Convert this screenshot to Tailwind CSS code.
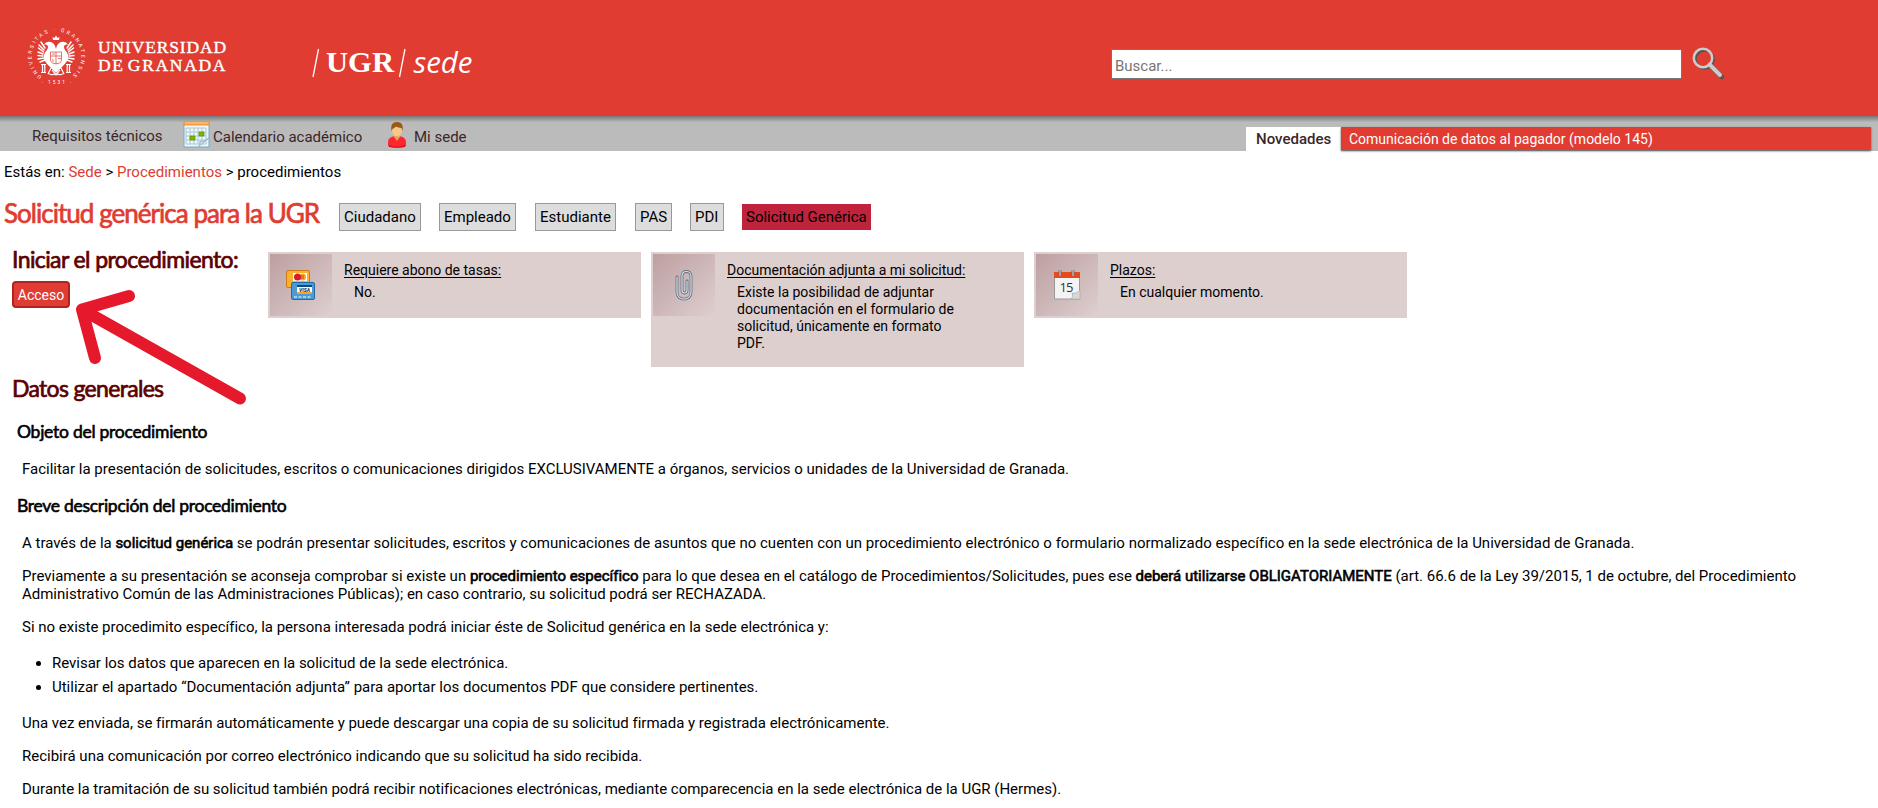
<!DOCTYPE html>
<html lang="es">
<head>
<meta charset="utf-8">
<title>Solicitud genérica para la UGR</title>
<script src="https://cdn.jsdelivr.net/npm/@tailwindcss/browser@4"></script>
</head>
<body class="relative h-[808px] overflow-hidden bg-white font-['Roboto',sans-serif] text-[15px] leading-[18px] text-black">
<header class="flex h-[116px] bg-[#e03c31]">
  <svg class="mt-[26px] ml-[26px] h-[60px] w-[60px] shrink-0 overflow-visible" viewBox="0 0 60 60" fill="#fff">
    <defs><path id="ring" d="M17.500 51.500A24.800 24.800 0 1 1 43.500 51.500"/></defs>
    <text font-family="Roboto" font-size="5.200"><textPath href="#ring" startOffset="2" textLength="122">UNIVERSITAS · GRANATENSIS</textPath></text>
    <text x="31.500" y="57.500" font-family="Roboto" font-size="4.800" text-anchor="middle" letter-spacing="2">· 1531 ·</text>
    <path d="M27 14l-.5-3 2 1 1.500-2.500 1.500 2.500 2-1-.5 3z"/>
    <path d="M30 23c-1-5-4-8-8-7-2 0-3 1-4 3 2-1 4 0 4 2 0 3-3 4-4 8-1 5 3 9 6 12l6 6 6-6c3-3 7-7 6-12-1-4-4-5-4-8 0-2 2-3 4-2-1-2-2-3-4-3-4-1-7 2-8 7z"/>
    <g stroke="#fff" stroke-width="1.500" stroke-linecap="round" fill="none"><path d="M19 22l-4-6M18 24l-5-5M17.500 26l-5-4M17 28l-5-2M17 30l-5-.5M18 32l-6 1M19 34l-5 2M41 22l4-6M42 24l5-5M42.500 26l5-4M43 28l5-2M43 30l5-.5M42 32l6 1M41 34l5 2"/></g>
    <g stroke="#fff" stroke-width="1.200" fill="none"><path d="M15 38.500h5M15 46.500h5M16.500 39v7M18.800 39v7M40 38.500h5M40 46.500h5M41.200 39v7M43.500 39v7M22 48l3-6M38 48l-3-6M22 47c2 3 5 1 8 1s6 2 8-1M26 44l4 5 4-5"/></g>
    <g stroke="#e03c31" stroke-width=".7" fill="none"><path d="M24.500 26h11v8c0 5-11 5-11 0zM24.500 30h11M30 26v12M26 28h3M32 32.500h3M27 33v3"/></g>
  </svg>
  <div class="mt-[38px] ml-[12px] w-[214px] font-['Liberation_Serif',serif] text-[17.500px] leading-[18px] text-white [-webkit-text-stroke:0.400px_white]">
    <p class="whitespace-nowrap tracking-[0.860px]">UNIVERSIDAD</p><p class="whitespace-nowrap tracking-[1.700px] [word-spacing:-3px]">DE GRANADA</p>
  </div>
  <svg class="mt-[44px] h-[40px] w-[170px] overflow-visible" viewBox="0 0 170 40" fill="#fff"><path d="M1 33L6.500 5M87.500 33L93 5" stroke="#fff" stroke-width="1.300"/>
    <text x="14" y="28" font-family="Liberation Serif" font-weight="bold" font-size="29" textLength="68" lengthAdjust="spacingAndGlyphs">UGR</text>
    <text x="101.500" y="28.500" font-family="Open Sans" font-style="italic" font-size="29" textLength="59" lengthAdjust="spacingAndGlyphs">sede</text></svg>
  <div class="mt-[49px] ml-[629px] flex h-[30px] w-[571px] items-center border border-[#767676] bg-white pt-[4px] pl-[3px] text-[15px] text-[#757575]">Buscar...</div>
  <svg class="mt-[46px] ml-[9px] h-[36px] w-[36px]" viewBox="0 0 36 36" fill="none"><g stroke="#555" transform="translate(1 1)"><circle cx="12.500" cy="12.500" r="9" stroke-width="2.500"/><path d="M19 19L30 30" stroke-width="4.500" stroke-linecap="round"/></g><g stroke="#ccc"><circle cx="12" cy="12" r="9.200" stroke-width="2.500"/><path d="M18.500 18.500L29 29" stroke-width="4" stroke-linecap="round"/></g></svg>
</header>
<nav class="flex h-[35px] bg-[#bbb] bg-linear-to-b from-[#777] via-[#bbb] via-[18%] to-[#bbb] text-[#3b2626]">
  <a class="mt-[11px] ml-[32px] w-[151px]">Requisitos técnicos</a>
  <svg class="mt-[5px] h-[28px] w-[28px]" viewBox="0 0 28 28"><path d="M1 1h25v25h-25z" fill="#eef6fb" stroke="#79a9c8"/><path d="M.5.500h26v4h-26z" fill="#f49a3b"/><path d="M2 2h23" stroke="#ffd19b"/><path d="M3 7h20v16h-20zM3 11h20M3 15h20M3 19h20M7 7v16M11 7v16M15 7v16M19 7v16" stroke="#b0c4cf" fill="none"/><path d="M7 15h5v4h-5zM16 11h5v4h-5z" fill="#79b800" stroke="#549000" stroke-width=".7"/><path d="M15 26c2-2 2-3 2-6 4 1 6-1 9-3z" fill="#cee4f3" stroke="#8cb6d4"/></svg>
  <a class="mt-[12px] ml-[2px] w-[174px]">Calendario académico</a>
  <svg class="mt-[5px] h-[28px] w-[20px]" viewBox="0 0 20 28"><path d="M1 22c0-5 3-7 9-7s9 2 9 7v3c-5 2-13 2-18 0z" fill="#ff2630"/><path d="M2 24c5 2 11 2 16 0v2c-5 1-11 1-16 0z" fill="#d5101d"/><path d="M7 12h6v4l-3 4-3-4z" fill="#e6a254"/><ellipse cx="10" cy="9.500" rx="4.800" ry="6" fill="#f6c98a"/><path d="M4.500 10c-1-6 1-9 5.500-9s6.500 3 5.500 9l-1-3c-3 0-5-2-6-1l-3 2z" fill="#9a5a12"/></svg>
  <a class="mt-[12px] ml-[7px] w-[832px]">Mi sede</a>
  <b class="mt-[11px] h-[24px] w-[95px] bg-white pt-[3px] pl-[10px] font-medium">Novedades</b>
  <span class="mt-[11px] h-[23px] w-[530px] bg-[#e03c31] pt-[3px] pl-[8px] text-[14px] text-white shadow-[0_1px_2px_#555]">Comunicación de datos al pagador (modelo 145)</span>
</nav>
<p class="mt-[12px] pl-[4px]">Estás en: <a class="text-[#e03c31]">Sede</a> &gt; <a class="text-[#e03c31]">Procedimientos</a> &gt; procedimientos</p>
<div class="mt-[17px] flex h-[34px] pl-[4px]">
  <h1 class="-mt-px w-[335px] font-['Lato',sans-serif] text-[26px] leading-[32px] font-normal tracking-[-0.970px] whitespace-nowrap text-[#e03c31] [-webkit-text-stroke:0.700px]">Solicitud genérica para la UGR</h1>
  <div class="mt-[5px] flex h-[28px] gap-[18px] leading-[26px] whitespace-nowrap">
    <a class="w-[82px] border border-[#999] bg-[#ddd] pl-[4px]">Ciudadano</a>
    <a class="w-[77px] border border-[#999] bg-[#ddd] pl-[4px]">Empleado</a>
    <a class="ml-px w-[81px] border border-[#999] bg-[#ddd] pl-[4px]">Estudiante</a>
    <a class="ml-px w-[37px] border border-[#999] bg-[#ddd] pl-[4px]">PAS</a>
    <a class="w-[34px] border border-[#999] bg-[#ddd] pl-[4px]">PDI</a>
    <a class="my-px w-[129px] bg-[#c0233c] pl-[4px] leading-[26px]">Solicitud Genérica</a>
  </div>
</div>
<main>
  <div class="mt-[20px] flex h-[128px] items-start">
    <div class="ml-[12px] w-[256px]">
      <h2 class="-mt-[9px] font-['Lato',sans-serif] text-[23px] leading-[32px] font-normal tracking-[-0.600px] whitespace-nowrap text-[#5c0000] [-webkit-text-stroke:0.700px]">Iniciar el procedimiento:</h2>
      <button class="mt-[6px] h-[27px] w-[58px] rounded-[4px] border-2 border-[#b22222] bg-[#e03c31] text-[14px] text-white">Acceso</button>
    </div>
    <section class="flex h-[66px] w-[373px] bg-[#decfcf] p-[2px] text-[14px] leading-[17px]">
      <div class="flex h-[62px] w-[62px] items-center justify-center bg-linear-135 from-[#bd9fa1] to-[#decfcf]"><svg class="h-[32px] w-[32px]" viewBox="0 0 32 32"><rect x="1.500" y="1.500" width="23" height="17" rx="1.500" fill="#fdb02c" stroke="#ca7b15"/><path d="M8 4h14v8h-14z" fill="#fff"/><circle cx="17.500" cy="8" r="3.500" fill="#f7a329"/><circle cx="12.500" cy="8" r="3.500" fill="#d51c2d"/><path d="M13 7h6M13 9h6" stroke="#d51c2d" stroke-width=".8"/><rect x="6.500" y="13.500" width="23" height="17" rx="1.500" fill="#4b9bd5" stroke="#226ba6"/><path d="M12 16h15v9h-15z" fill="#fff"/><path d="M12 16h15v2h-15z" fill="#10457f"/><path d="M12 23h15v2h-15z" fill="#f8a51c"/><text x="14" y="22.500" font-family="Roboto" font-size="5" font-weight="900" font-style="italic" fill="#123b78" textLength="11">VISA</text><path d="M9 28h18" stroke="#fff" stroke-dasharray="3 1.500"/></svg></div>
      <div class="mt-[8px] ml-[12px]"><h3 class="underline underline-offset-[2px]">Requiere abono de tasas:</h3><p class="mt-[5px] ml-[10px] w-[230px]">No.</p></div>
    </section>
    <section class="ml-[10px] flex h-[115px] w-[373px] bg-[#decfcf] p-[2px] text-[14px] leading-[17px]">
      <div class="flex h-[62px] w-[62px] items-center justify-center bg-linear-135 from-[#bd9fa1] to-[#decfcf]"><svg class="h-[32px] w-[32px]" viewBox="0 0 32 32" fill="none" stroke-linecap="round"><path d="M9 8v15c0 9.500 14 9.500 14 0V7c0-6-9-6-9 0v14c0 4 5 4 5 0V12" stroke="#5f7080" stroke-width="2.800"/><path d="M9 8v15c0 9.500 14 9.500 14 0V7c0-6-9-6-9 0v14c0 4 5 4 5 0V12" stroke="#d5dfe8" stroke-width="1.200"/></svg></div>
      <div class="mt-[8px] ml-[12px]"><h3 class="underline underline-offset-[2px]">Documentación adjunta a mi solicitud:</h3><p class="mt-[5px] ml-[10px] w-[230px]">Existe la posibilidad de adjuntar<br>documentación en el formulario de<br>solicitud, únicamente en formato<br>PDF.</p></div>
    </section>
    <section class="ml-[10px] flex h-[66px] w-[373px] bg-[#decfcf] p-[2px] text-[14px] leading-[17px]">
      <div class="flex h-[62px] w-[62px] items-center justify-center bg-linear-135 from-[#bd9fa1] to-[#decfcf]"><svg class="h-[32px] w-[32px]" viewBox="0 0 32 32"><path d="M3.500 4h25v26h-25z" fill="#f3f3f3" stroke="#999"/><path d="M3 3h26v6h-26z" fill="#e84a1f"/><path d="M9 1v6M22 1v6" stroke="#666" stroke-width="2.800"/><path d="M9 1v6M22 1v6" stroke="#ddd" stroke-width="1"/><text x="8.500" y="23" font-family="Open Sans" font-size="13" fill="#333" textLength="14">15</text><path d="M20 30c2-2 2-3 1-6 3 1 5 0 8-3v9z" fill="#d8d8d8" stroke="#aaa" stroke-width=".7"/></svg></div>
      <div class="mt-[8px] ml-[12px]"><h3 class="underline underline-offset-[2px]">Plazos:</h3><p class="mt-[5px] ml-[10px] w-[230px]">En cualquier momento.</p></div>
    </section>
  </div>
  <h2 class="-mt-[8px] ml-[12px] font-['Lato',sans-serif] text-[23px] leading-[32px] font-normal tracking-[-0.680px] text-[#5c0000] [-webkit-text-stroke:0.700px]">Datos generales</h2>
  <h3 class="mt-[17px] ml-[17px] font-['Lato',sans-serif] text-[17.500px] leading-[22px] font-normal tracking-[-0.250px] [-webkit-text-stroke:0.600px]">Objeto del procedimiento</h3>
  <p class="mt-[17px] ml-[22px] tracking-[-0.005px]">Facilitar la presentación de solicitudes, escritos o comunicaciones dirigidos EXCLUSIVAMENTE a órganos, servicios o unidades de la Universidad de Granada.</p>
  <h3 class="mt-[17px] ml-[17px] font-['Lato',sans-serif] text-[17.500px] leading-[22px] font-normal tracking-[-0.280px] [-webkit-text-stroke:0.600px]">Breve descripción del procedimiento</h3>
  <div class="mt-[17px] ml-[22px] flex w-[1800px] flex-col gap-[15px] tracking-[-0.008px]">
    <p>A través de la <b class="font-normal [-webkit-text-stroke:0.600px]">solicitud genérica</b> se podrán presentar solicitudes, escritos y comunicaciones de asuntos que no cuenten con un procedimiento electrónico o formulario normalizado específico en la sede electrónica de la Universidad de Granada.</p>
    <p class="whitespace-nowrap">Previamente a su presentación se aconseja comprobar si existe un <b class="font-normal [-webkit-text-stroke:0.600px]">procedimiento específico</b> para lo que desea en el catálogo de Procedimientos/Solicitudes, pues ese <b class="font-normal [-webkit-text-stroke:0.600px]">deberá utilizarse OBLIGATORIAMENTE</b> (art. 66.6 de la Ley 39/2015, 1 de octubre, del Procedimiento<br>Administrativo Común de las Administraciones Públicas); en caso contrario, su solicitud podrá ser RECHAZADA.</p>
    <p>Si no existe procedimito específico, la persona interesada podrá iniciar éste de Solicitud genérica en la sede electrónica y:</p>
    <ul class="my-[3px] flex list-disc flex-col gap-[6px] pl-[30px]"><li>Revisar los datos que aparecen en la solicitud de la sede electrónica.</li><li>Utilizar el apartado “Documentación adjunta” para aportar los documentos PDF que considere pertinentes.</li></ul>
    <p>Una vez enviada, se firmarán automáticamente y puede descargar una copia de su solicitud firmada y registrada electrónicamente.</p>
    <p>Recibirá una comunicación por correo electrónico indicando que su solicitud ha sido recibida.</p>
    <p>Durante la tramitación de su solicitud también podrá recibir notificaciones electrónicas, mediante comparecencia en la sede electrónica de la UGR (Hermes).</p>
  </div>
</main>
<svg class="absolute top-[280px] left-[65px] h-[130px] w-[190px]" viewBox="65 280 190 130" fill="none" stroke="#e5182c" stroke-width="12" stroke-linecap="round" stroke-linejoin="round"><path d="M240 398.500L82 309.500M129 296L82 309.500L95 358"/></svg>
</body>
</html>
